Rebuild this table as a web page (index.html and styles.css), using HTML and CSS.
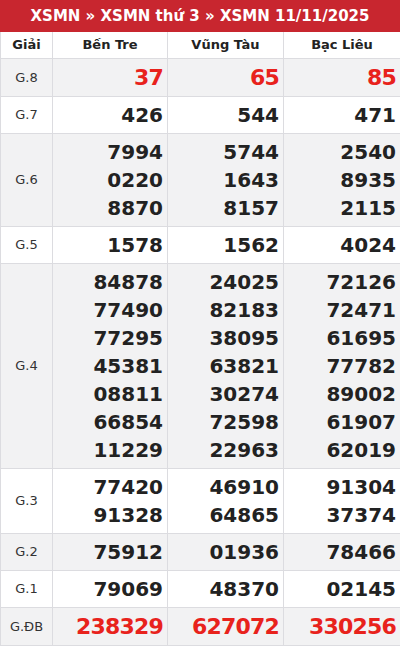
FILE: index.html
```html
<!DOCTYPE html>
<html lang="vi">
<head>
<meta charset="utf-8">
<link rel="stylesheet" href="styles.css">
</head>
<body>
<div class="box">
  <div class="title">XSMN » XSMN thứ 3 » XSMN 11/11/2025</div>
  <table class="kq">
    <colgroup><col class="c0"><col class="c1"><col class="c2"><col class="c3"></colgroup>
    <thead>
      <tr><th>Giải</th><th>Bến Tre</th><th>Vũng Tàu</th><th>Bạc Liêu</th></tr>
    </thead>
    <tbody>
      <tr class="alt"><td class="g">G.8</td><td class="n red big">37</td><td class="n red big">65</td><td class="n red big">85</td></tr>
      <tr><td class="g">G.7</td><td class="n">426</td><td class="n">544</td><td class="n">471</td></tr>
      <tr class="alt"><td class="g">G.6</td><td class="n">7994<br>0220<br>8870</td><td class="n">5744<br>1643<br>8157</td><td class="n">2540<br>8935<br>2115</td></tr>
      <tr><td class="g">G.5</td><td class="n">1578</td><td class="n">1562</td><td class="n">4024</td></tr>
      <tr class="alt"><td class="g">G.4</td><td class="n">84878<br>77490<br>77295<br>45381<br>08811<br>66854<br>11229</td><td class="n">24025<br>82183<br>38095<br>63821<br>30274<br>72598<br>22963</td><td class="n">72126<br>72471<br>61695<br>77782<br>89002<br>61907<br>62019</td></tr>
      <tr><td class="g">G.3</td><td class="n">77420<br>91328</td><td class="n">46910<br>64865</td><td class="n">91304<br>37374</td></tr>
      <tr class="alt"><td class="g">G.2</td><td class="n">75912</td><td class="n">01936</td><td class="n">78466</td></tr>
      <tr><td class="g">G.1</td><td class="n">79069</td><td class="n">48370</td><td class="n">02145</td></tr>
      <tr class="alt"><td class="g">G.ĐB</td><td class="n red big">238329</td><td class="n red big">627072</td><td class="n red big">330256</td></tr>
    </tbody>
  </table>
</div>
</body>
</html>
```
FILE: styles.css
```css
* { box-sizing: border-box; }
html, body { margin: 0; padding: 0; background: #fff; }
body { font-family: "DejaVu Sans", sans-serif; color: #222; }
.box { width: 400px; }
.title {
  height: 32px;
  background: #c8262f;
  color: #fff;
  font-weight: bold;
  font-size: 15px;
  line-height: 32px;
  text-align: center;
}
.kq {
  width: 400px;
  border-collapse: collapse;
  table-layout: fixed;
  border: 1px solid #d9d9de;
  border-top: 0;
}
.c0 { width: 52px; }
.c1 { width: 115px; }
.c2 { width: 116px; }
.c3 { width: 117px; }
.kq th {
  height: 26px;
  font-size: 13px;
  font-weight: bold;
  color: #222;
  text-align: center;
  border: 1px solid #dcdce0;
  border-top: 0;
  padding: 0;
}
.kq td {
  border: 1px solid #dcdce0;
  padding: 4px 4px 4px 4px;
}
.kq tr.alt td { background: #f2f2f3; }
.g {
  text-align: center;
  font-size: 13px;
  color: #333;
}
.n {
  text-align: right;
  font-weight: bold;
  font-size: 20px;
  line-height: 28px;
  color: #222;
}
.red { color: #e8221c; }
.big { font-size: 22px; line-height: 29px; letter-spacing: -0.8px; }
```
